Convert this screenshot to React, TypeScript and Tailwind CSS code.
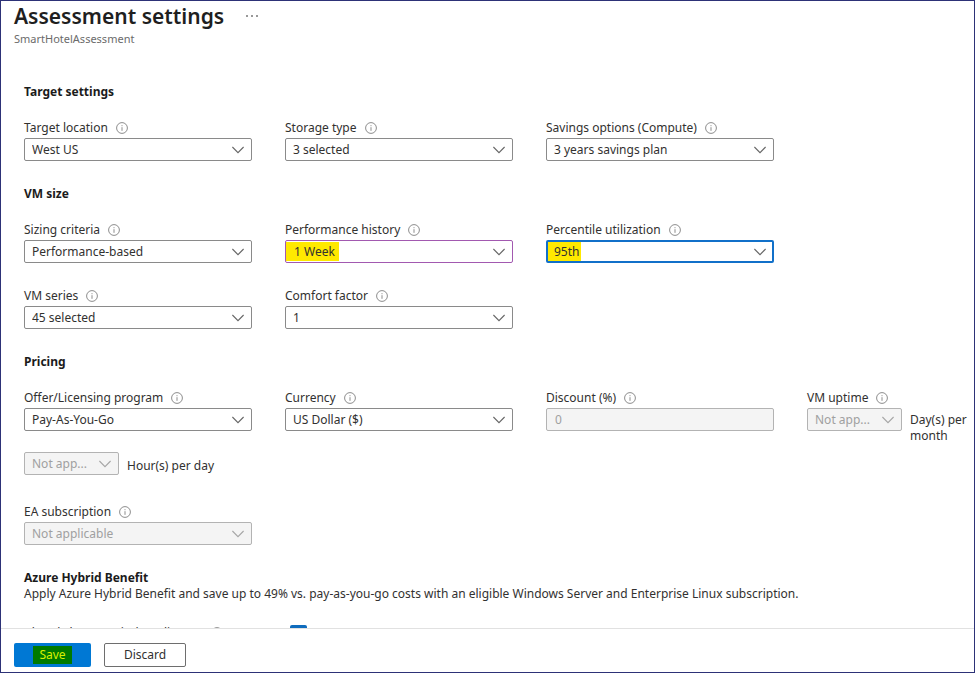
import { useId, type ReactNode } from "react";

function InfoIcon() {
  return (
    <svg className="size-3 shrink-0" viewBox="0 0 12 12" fill="none" stroke="#808080" aria-hidden="true">
      <circle cx="6" cy="6" r="5.4" strokeWidth="0.9" />
      <path d="M6 5.2V8.8M6 3.2V4.2" strokeWidth="0.9" />
    </svg>
  );
}

function Chevron({ muted }: { muted?: boolean }) {
  return (
    <svg
      className="pointer-events-none absolute top-1/2 right-2 h-2 w-3 -translate-y-1/2"
      viewBox="0 0 12 8"
      fill="none"
      stroke={muted ? "#a6a6a6" : "#666666"}
      aria-hidden="true"
    >
      <path d="M0.4 1L6 6.6L11.6 1" strokeWidth="1.1" />
    </svg>
  );
}

function Label({ id, children }: { id: string; children: ReactNode }) {
  return (
    <div className="mb-0.5 flex items-center gap-2 whitespace-nowrap">
      <label htmlFor={id}>{children}</label>
      <InfoIcon />
    </div>
  );
}

type Tone = "normal" | "edited" | "focused" | "disabled";

const tones: Record<Tone, string> = {
  normal: "border border-[#8a8a8a] px-[7px]",
  edited: "border border-[#a259b0] px-[8px]",
  focused: "border-2 border-[#1170c9] px-[6px]",
  disabled: "border border-[#b3b3b3] bg-[#f4f4f4] px-[7px] text-[#a0a0a0] opacity-100",
};

function Dropdown({ id, value, tone = "normal", label, mark }: {
  id?: string;
  value: string;
  tone?: Tone;
  label?: string;
  mark?: string;
}) {
  return (
    <div className="relative">
      {mark && <span className={`absolute inset-y-0.5 left-px bg-[#ffe900] ${mark}`} />}
      <select
        id={id}
        aria-label={label}
        disabled={tone === "disabled"}
        className={`relative block h-[23px] w-full appearance-none rounded-[2px] outline-none ${tones[tone]}`}
      >
        <option>{value}</option>
      </select>
      <Chevron muted={tone === "disabled"} />
    </div>
  );
}

function Field({ label, value, tone, mark }: { label: string; value: string; tone?: Tone; mark?: string }) {
  const id = useId();
  return (
    <div>
      <Label id={id}>{label}</Label>
      <Dropdown id={id} value={value} tone={tone} mark={mark} />
    </div>
  );
}

function Section({ title, children }: { title: string; children: ReactNode }) {
  return (
    <section className="mb-[25px]">
      <h2 className="mb-5 font-bold text-[#1b1b1b]">{title}</h2>
      <div className="grid grid-cols-[repeat(3,228px)_1fr] gap-x-[33px] gap-y-[25px]">{children}</div>
    </section>
  );
}

export default function App() {
  return (
    <div className="flex h-screen flex-col overflow-hidden border border-[#2d3277] bg-white font-['Noto_Sans',sans-serif] text-[12px] leading-4 text-[#323130]">
      <header className="shrink-0 px-[13px]">
        <div className="flex items-center gap-[22px]">
          <h1 className="text-[21px] leading-[30px] font-semibold text-[#1f1f1f]">Assessment settings</h1>
          <button type="button" aria-label="More actions" className="flex gap-[3px]">
            <span className="size-[2px] rounded-full bg-[#777]" />
            <span className="size-[2px] rounded-full bg-[#777]" />
            <span className="size-[2px] rounded-full bg-[#777]" />
          </button>
        </div>
        <p className="text-[11px] leading-[15px] text-[#6b6b6b]">SmartHotelAssessment</p>
      </header>

      <main className="min-h-0 flex-1 overflow-hidden pt-[38px] pl-[23px]">
        <Section title="Target settings">
          <Field label="Target location" value="West US" />
          <Field label="Storage type" value="3 selected" />
          <Field label="Savings options (Compute)" value="3 years savings plan" />
        </Section>

        <Section title="VM size">
          <Field label="Sizing criteria" value="Performance-based" />
          <Field label="Performance history" value="1 Week" tone="edited" mark="w-[53px]" />
          <Field label="Percentile utilization" value="95th" tone="focused" mark="w-[34px]" />
          <div />
          <Field label="VM series" value="45 selected" />
          <Field label="Comfort factor" value="1" />
        </Section>

        <Section title="Pricing">
          <Field label="Offer/Licensing program" value="Pay-As-You-Go" />
          <Field label="Currency" value="US Dollar ($)" />
          <div>
            <Label id="discount">Discount (%)</Label>
            <input
              id="discount"
              disabled
              defaultValue="0"
              className="block h-[23px] w-full rounded-[2px] border border-[#b3b3b3] bg-[#f4f4f4] px-2 text-[#a0a0a0]"
            />
          </div>
          <div>
            <Label id="days">VM uptime</Label>
            <div className="flex h-[23px] gap-2">
              <div className="w-[95px] shrink-0">
                <Dropdown id="days" value="Not app..." tone="disabled" />
              </div>
              <span className="pt-1">Day(s) per month</span>
            </div>
          </div>
          <div className="-mt-1 mb-1 flex items-center gap-2">
            <div className="w-[95px]">
              <Dropdown label="Hours per day" value="Not app..." tone="disabled" />
            </div>
            <span className="pt-1">Hour(s) per day</span>
          </div>
          <div className="col-span-3" />
          <Field label="EA subscription" value="Not applicable" tone="disabled" />
        </Section>

        <section>
          <h2 className="font-bold text-[#1b1b1b]">Azure Hybrid Benefit</h2>
          <p>Apply Azure Hybrid Benefit and save up to 49% vs. pay-as-you-go costs with an eligible Windows Server and Enterprise Linux subscription.</p>
          <div className="mt-[23px] flex items-start">
            <div className="flex w-[266px] items-center gap-2 whitespace-nowrap">
              <label htmlFor="license">Already have a Windows license</label>
              <InfoIcon />
            </div>
            <input
              id="license"
              type="checkbox"
              defaultChecked
              className="size-[17px] appearance-none rounded-[2px] bg-[#0f6cbd]"
            />
          </div>
        </section>
      </main>

      <footer className="flex shrink-0 gap-[13px] border-t border-[#e1e1e1] px-[13px] pt-[14px] pb-[5px]">
        <button type="button" className="flex h-6 w-[77px] items-center justify-center rounded-[2px] bg-[#0078d4]">
          <span className="bg-[#007a00] px-1.5 py-px text-[#d9f000]">Save</span>
        </button>
        <button type="button" className="h-6 w-[82px] rounded-[2px] border border-[#6e6e6e]">Discard</button>
      </footer>
    </div>
  );
}
